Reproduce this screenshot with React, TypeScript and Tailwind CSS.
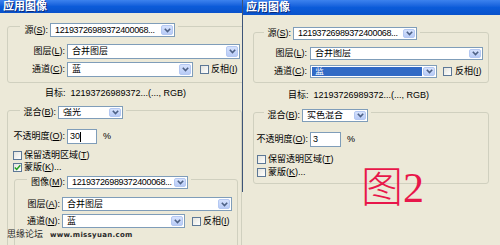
import React from 'react';

const font = "font-['Liberation_Sans','Noto_Sans_CJK_SC',sans-serif]";

const Key: React.FC<{ cn: string; k: string; tail?: string }> = ({ cn, k, tail = ':' }) => (
  <>
    {cn}(<span className="underline">{k}</span>){tail}
  </>
);

const Chevron: React.FC = () => (
  <svg width="7" height="5" viewBox="0 0 7 5">
    <path d="M0.8 0.8 L3.5 3.6 L6.2 0.8" fill="none" stroke="#4d6185" strokeWidth="1.6" />
  </svg>
);

const Dropdown: React.FC<{ w: string; h: string; text: string; active?: boolean; tight?: boolean }> = ({
  w,
  h,
  text,
  active,
  tight,
}) => (
  <div className={`${w} ${h} shrink-0 flex border border-[#7f9db9] bg-white`}>
    <div className="flex-1 flex p-[1px] min-w-0">
      <span
        className={`flex-1 flex items-center pl-[3px] whitespace-nowrap overflow-hidden ${
          tight ? 'tracking-[-0.35px]' : ''
        } ${active ? 'bg-[#316ac5] text-white' : 'text-black'}`}
      >
        {text}
      </span>
    </div>
    <div className="w-[12px] m-[1px] ml-0 rounded-[2px] bg-gradient-to-b from-[#d6e2fd] to-[#b8cbf6] border border-[#b4c8f2] flex items-center justify-center">
      <Chevron />
    </div>
  </div>
);

const Check: React.FC<{ on?: boolean }> = ({ on }) => (
  <div className="w-[9px] h-[9px] shrink-0 border border-[#5d7896] bg-gradient-to-br from-[#e4e4de] to-white flex items-center justify-center">
    {on && (
      <svg width="7" height="7" viewBox="0 0 7 7">
        <path d="M0.8 3.4 L2.7 5.4 L6.3 1.2" fill="none" stroke="#21a121" strokeWidth="1.5" />
      </svg>
    )}
  </div>
);

const Title: React.FC<{ h: string }> = ({ h }) => (
  <div
    className={`${h} shrink-0 bg-gradient-to-b from-[#3c82ee] via-[#0b5bd9] to-[#0952cb] text-white font-bold text-[11px] flex items-center pl-[3px] [text-shadow:1px_1px_0_#0a2a7a]`}
  >
    应用图像
  </div>
);

const LeftDialog: React.FC = () => (
  <div className="w-[242px] shrink-0 h-full flex flex-col overflow-hidden">
    <Title h="h-[13px]" />

    {/* source */}
    <div className="mt-[13px] ml-[7px] w-[260px] h-[57px] shrink-0 border border-[#d0d0bf] rounded-[3px] flex flex-col">
      <div className="-mt-[4px] ml-[12px] w-fit px-[3px] bg-[#ece9d8] flex items-center gap-[2px] h-[14px]">
        <span className="w-[25px] text-right whitespace-nowrap">
          <Key cn="源" k="S" />
        </span>
        <Dropdown w="w-[125px]" h="h-[14px]" text="12193726989372400068..." tight />
      </div>
      <div className="mt-[7px] flex items-center gap-[2px] h-[15px]">
        <span className="w-[57px] text-right whitespace-nowrap">
          <Key cn="图层" k="L" />
        </span>
        <Dropdown w="w-[173px]" h="h-[15px]" text="合并图层" />
      </div>
      <div className="mt-[3px] flex items-center gap-[2px] h-[15px]">
        <span className="w-[57px] text-right whitespace-nowrap">
          <Key cn="通道" k="C" />
        </span>
        <Dropdown w="w-[126px]" h="h-[15px]" text="蓝" />
        <div className="ml-[5px]">
          <Check />
        </div>
        <span className="whitespace-nowrap">
          反相(<span className="underline">I</span>)
        </span>
      </div>
    </div>

    <div className="mt-[4px] h-[12px] shrink-0 pl-[45px] flex items-center whitespace-nowrap">
      目标:&nbsp; 12193726989372...(..., RGB)
    </div>

    {/* blending */}
    <div className="mt-[11px] ml-[7px] w-[235px] h-[150px] shrink-0 border border-[#d0d0bf] rounded-[3px] flex flex-col">
      <div className="-mt-[5px] ml-[12px] w-fit px-[3px] bg-[#ece9d8] flex items-center gap-[2px] h-[13px]">
        <span className="w-[33px] text-right whitespace-nowrap">
          <Key cn="混合" k="B" />
        </span>
        <Dropdown w="w-[65px]" h="h-[13px]" text="强光" />
      </div>
      <div className="mt-[10px] flex items-center gap-[2px] h-[15px]">
        <span className="w-[57px] text-right whitespace-nowrap">
          <Key cn="不透明度" k="O" />
        </span>
        <div className="w-[30px] h-[15px] border border-[#7f9db9] bg-white flex items-center pl-[2px]">
          30<span className="w-[1px] h-[10px] bg-black" />
        </div>
        <span className="ml-[4px]">%</span>
      </div>
      <div className="mt-[6px] h-[12px] pl-[5px] flex items-center gap-[2px]">
        <Check />
        <span className="whitespace-nowrap">
          保留透明区域(<span className="underline">T</span>)
        </span>
      </div>
      <div className="mt-[2px] h-[12px] pl-[5px] flex items-center gap-[2px]">
        <Check on />
        <span className="whitespace-nowrap">
          蒙版(<span className="underline">K</span>)...
        </span>
      </div>

      {/* mask */}
      <div className="mt-[6px] ml-[6px] w-[224px] h-[80px] shrink-0 border border-[#d0d0bf] rounded-[3px] flex flex-col">
        <div className="-mt-[4px] ml-[12px] w-fit px-[3px] bg-[#ece9d8] flex items-center gap-[2px] h-[13px]">
          <span className="w-[35px] text-right whitespace-nowrap">
            <Key cn="图像" k="M" />
          </span>
          <Dropdown w="w-[121px]" h="h-[13px]" text="12193726989372400068..." tight />
        </div>
        <div className="mt-[8px] flex items-center gap-[2px] h-[14px]">
          <span className="w-[45px] text-right whitespace-nowrap">
            <Key cn="图层" k="A" />
          </span>
          <Dropdown w="w-[170px]" h="h-[14px]" text="合并图层" />
        </div>
        <div className="mt-[3px] flex items-center gap-[2px] h-[14px]">
          <span className="w-[45px] text-right whitespace-nowrap">
            <Key cn="通道" k="N" />
          </span>
          <Dropdown w="w-[123px]" h="h-[14px]" text="蓝" />
          <div className="ml-[5px]">
            <Check />
          </div>
          <span className="whitespace-nowrap">
            反相(<span className="underline">I</span>)
          </span>
        </div>
      </div>
    </div>
  </div>
);

const RightDialog: React.FC = () => (
  <div className="w-[258px] shrink-0 h-[192px] border-l border-[#3d5478] flex flex-col overflow-hidden">
    <Title h="h-[15px]" />

    <div className="mt-[17px] ml-[10px] w-[236px] h-[51px] shrink-0 border border-[#d0d0bf] rounded-[3px] flex flex-col">
      <div className="-mt-[6px] ml-[10px] w-fit px-[3px] bg-[#ece9d8] flex items-center gap-[2px] h-[13px]">
        <span className="w-[24px] text-right whitespace-nowrap">
          <Key cn="源" k="S" />
        </span>
        <Dropdown w="w-[124px]" h="h-[13px]" text="12193726989372400068..." tight />
      </div>
      <div className="mt-[7px] flex items-center gap-[3px] h-[13px]">
        <span className="w-[53px] text-right whitespace-nowrap">
          <Key cn="图层" k="L" />
        </span>
        <Dropdown w="w-[173px]" h="h-[13px]" text="合并图层" />
      </div>
      <div className="mt-[5px] flex items-center gap-[3px] h-[13px]">
        <span className="w-[53px] text-right whitespace-nowrap">
          <Key cn="通道" k="C" />
        </span>
        <Dropdown w="w-[127px]" h="h-[13px]" text="蓝" active />
        <div className="ml-[3px]">
          <Check />
        </div>
        <span className="whitespace-nowrap">
          反相(<span className="underline">I</span>)
        </span>
      </div>
    </div>

    <div className="mt-[6px] h-[12px] shrink-0 pl-[45px] flex items-center whitespace-nowrap">
      目标:&nbsp; 12193726989372...(..., RGB)
    </div>

    <div className="mt-[11px] ml-[10px] w-[236px] h-[72px] shrink-0 border border-[#d0d0bf] rounded-[3px] flex flex-col">
      <div className="-mt-[4px] ml-[10px] w-fit px-[3px] bg-[#ece9d8] flex items-center gap-[2px] h-[13px]">
        <span className="w-[33px] text-right whitespace-nowrap">
          <Key cn="混合" k="B" />
        </span>
        <Dropdown w="w-[66px]" h="h-[13px]" text="实色混合" />
      </div>
      <div className="mt-[10px] flex items-center gap-[2px] h-[15px]">
        <span className="w-[54px] text-right whitespace-nowrap">
          <Key cn="不透明度" k="O" />
        </span>
        <div className="w-[31px] h-[15px] border border-[#7f9db9] bg-white flex items-center pl-[2px]">3</div>
        <span className="ml-[4px]">%</span>
      </div>
      <div className="mt-[6px] h-[12px] pl-[3px] flex items-center gap-[2px]">
        <Check />
        <span className="whitespace-nowrap">
          保留透明区域(<span className="underline">T</span>)
        </span>
      </div>
      <div className="mt-[1px] h-[12px] pl-[3px] flex items-center gap-[2px]">
        <Check />
        <span className="whitespace-nowrap">
          蒙版(<span className="underline">K</span>)...
        </span>
      </div>
    </div>
  </div>
);

export default function App() {
  return (
    <div className={`relative w-[500px] h-[245px] overflow-hidden bg-[#ece9d8] text-black text-[9px] leading-none ${font} flex`}>
      <LeftDialog />
      <RightDialog />

      {/* annotation */}
      <div className="absolute left-[361px] top-[167px] text-[42px] leading-none text-[#e8174a] font-['Liberation_Serif','Noto_Sans_CJK_SC',serif] font-light">
        图2
      </div>

      {/* watermark */}
      <div className="absolute left-[7px] top-[230px] flex items-end gap-[7px] text-[#2a2a2a]">
        <span className="text-[9px]">思缘论坛</span>
        <span className="text-[7px] font-bold tracking-[0.3px] font-['DejaVu_Sans',sans-serif]">www.missyuan.com</span>
      </div>
    </div>
  );
}
